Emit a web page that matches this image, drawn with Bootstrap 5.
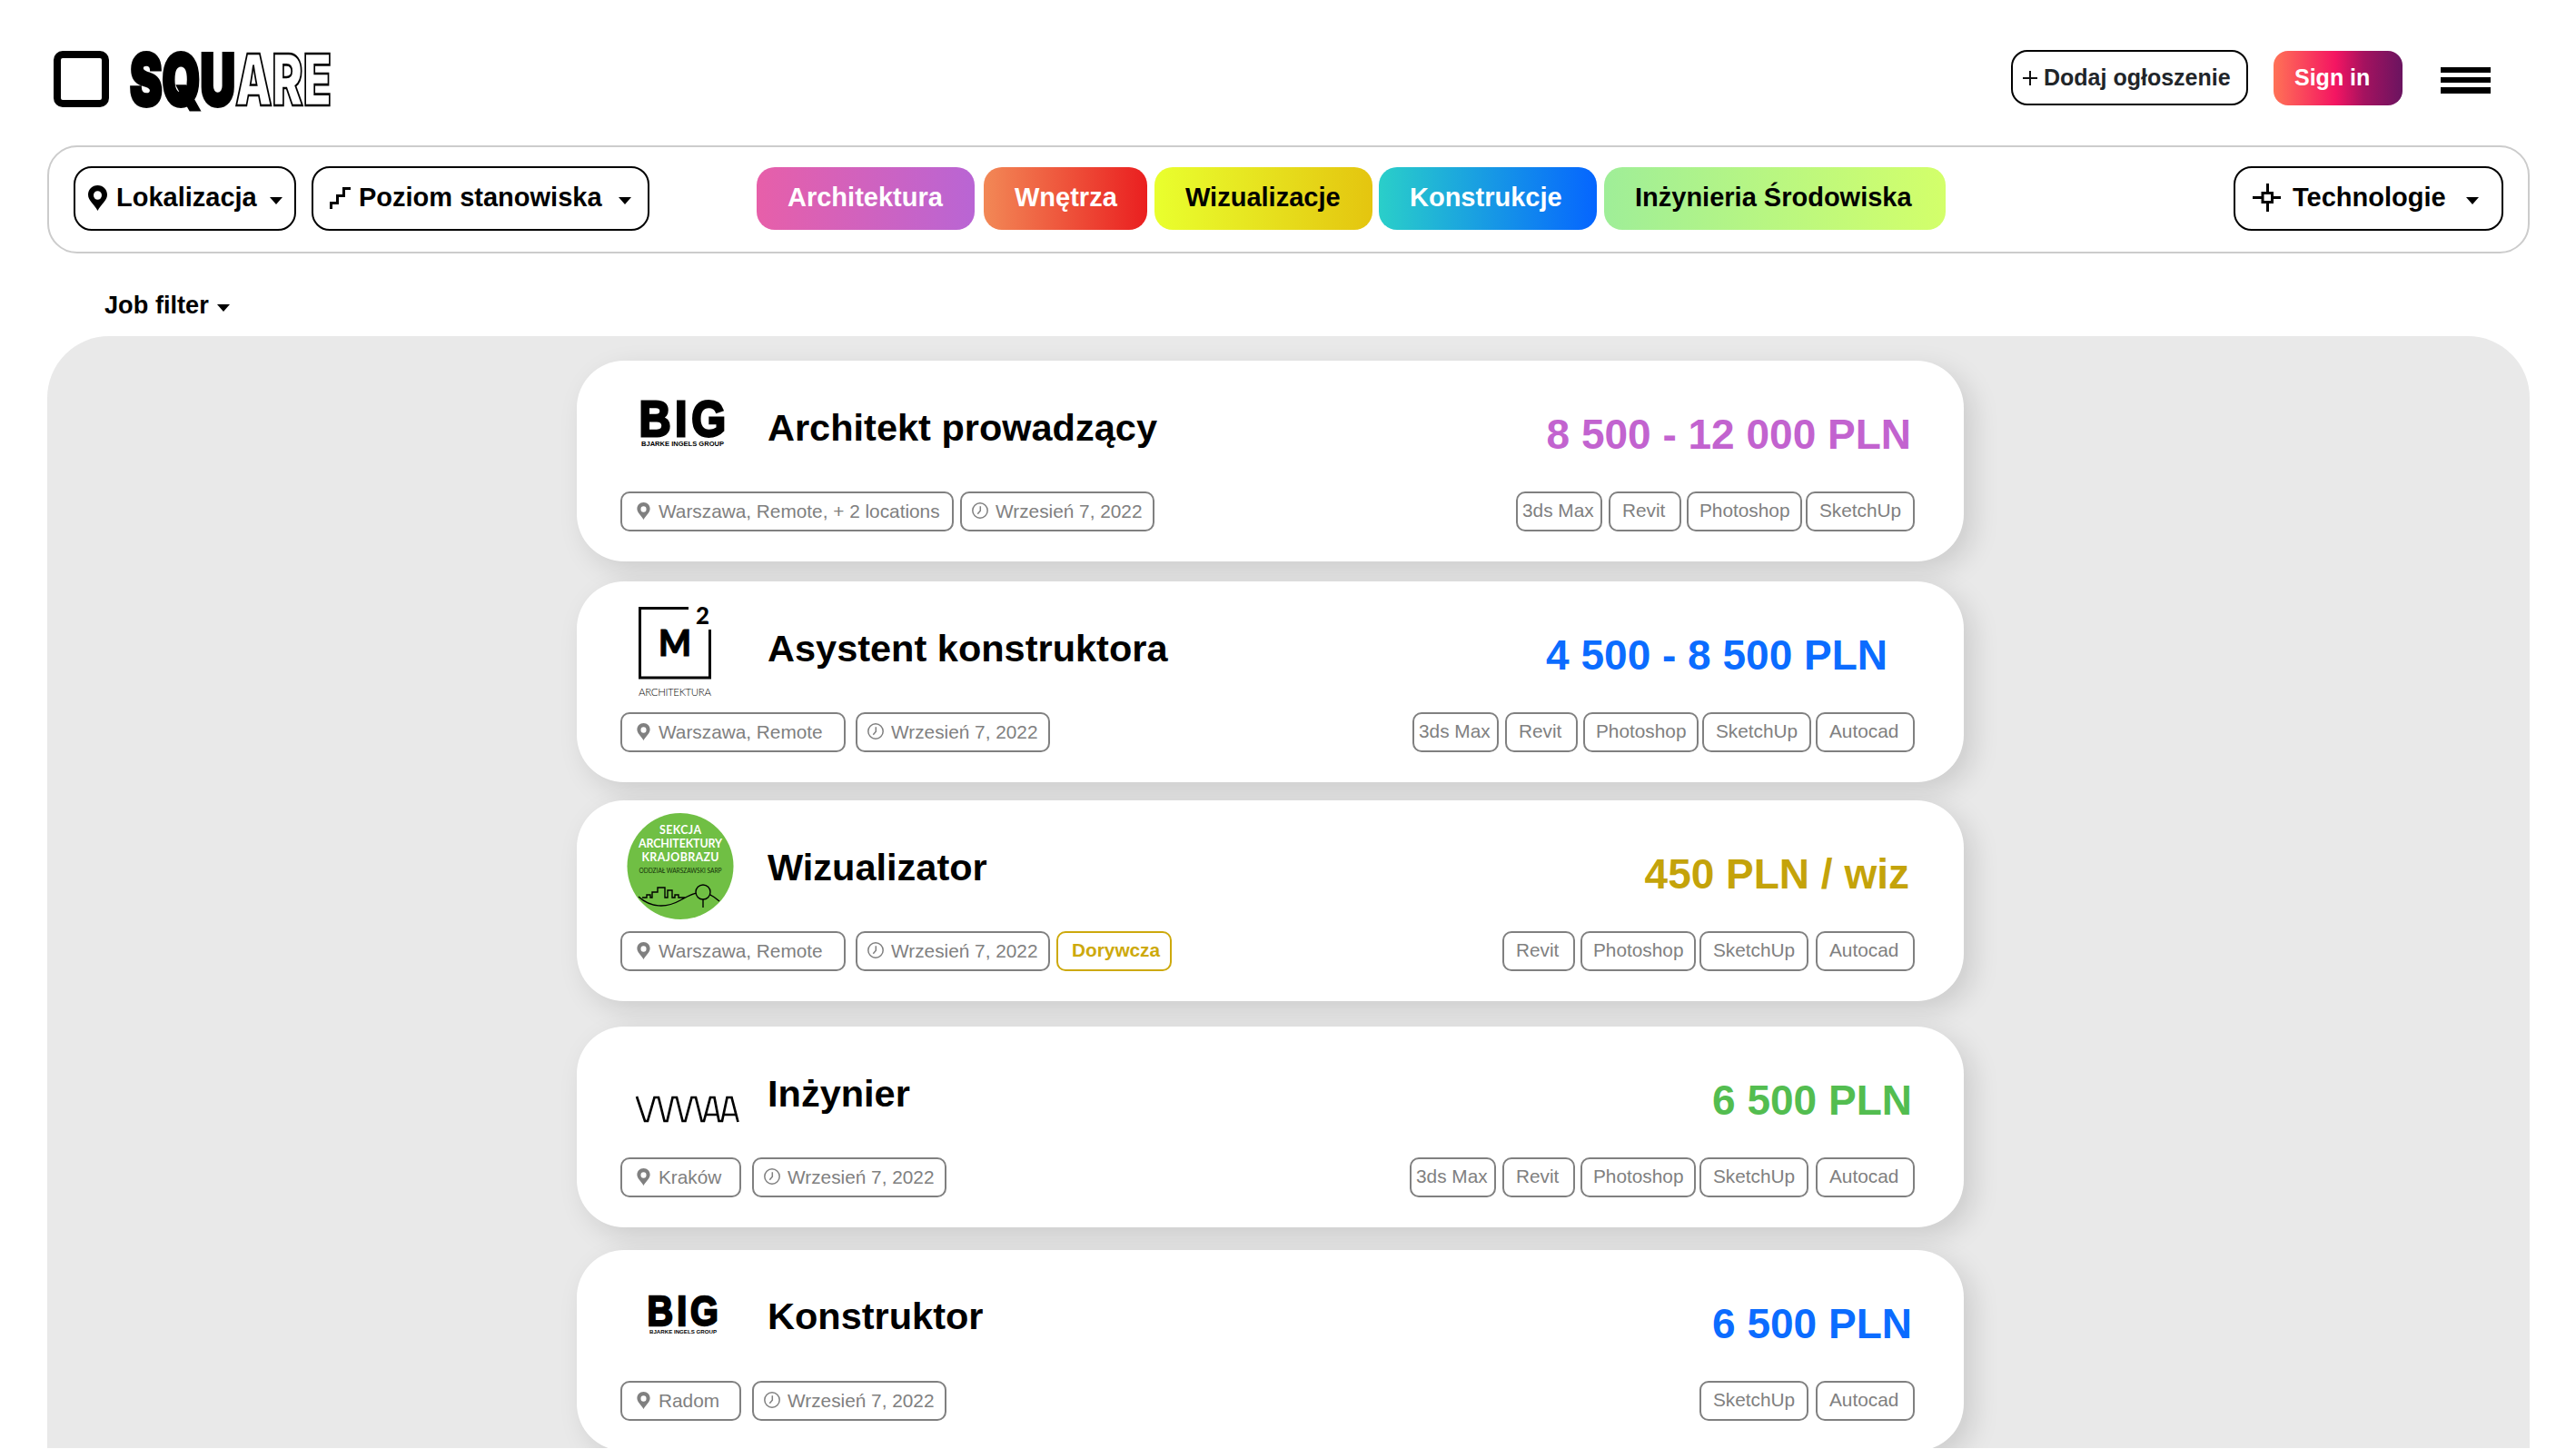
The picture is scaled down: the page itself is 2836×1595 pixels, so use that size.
<!DOCTYPE html>
<html lang="pl">
<head>
<meta charset="utf-8">
<meta name="viewport" content="width=device-width, initial-scale=1">
<title>SQUARE</title>
<link href="https://cdn.jsdelivr.net/npm/bootstrap@5.3.0/dist/css/bootstrap.min.css" rel="stylesheet">
<style>
  body { font-family: "Liberation Sans", Arial, sans-serif; color: #000; background: #fff; height: 1595px; overflow: hidden; }
  svg { display: block; overflow: visible; flex: none; }

  .topbar { height: 160px; padding: 55px 94px 0 59px; }
  .brand-mark { width: 61px; height: 62px; border: 8px solid #000; border-radius: 10px; margin-top: 1px; }
  .btn-add { width: 261px; height: 61px; border: 2px solid #000; border-radius: 18px; padding: 0 0 0 11px; font-size: 25px; font-weight: 700; color: #212529; gap: 7px; }
  .btn-sign { width: 142px; height: 60px; margin: 1px 42px 0 28px; border: 0; border-radius: 16px; padding: 0 0 1px 23px; font-size: 25px; font-weight: 700; color: #fff;
    background: linear-gradient(90deg, #ff7256 0%, #f41562 48%, #a5125f 70%, #6a1460 100%); }
  .burger { width: 55px; margin-top: 18.5px; gap: 5px; }
  .burger span { height: 6.4px; background: #000; }

  .filterbar { height: 119px; margin: 0 51px 0 52px; border: 2px solid #ccc; border-radius: 33px; padding: 0 27px 2px; }
  .pick { height: 71px; border: 2px solid #000; border-radius: 20px; padding: 0 0 2px; font-size: 29px; font-weight: 700; color: #000; }
  .pick-loc { width: 245px; padding-left: 14px; margin-right: 17px; }
  .pick-lvl { width: 372px; padding-left: 18px; margin-right: 118px; }
  .pick-tech { width: 297px; padding-left: 19px; }
  .tri { width: 0; height: 0; border: 7.5px solid transparent; border-top: 8px solid #000; border-bottom: 0; margin-top: 6px; }
  .cat { height: 69px; border: 0; border-radius: 20px; padding: 0 0 1px 34px; font-size: 29px; font-weight: 700; color: #000; text-align: left; }
  .cat-arch { width: 240px; color: #fff; background: linear-gradient(90deg, #e75fa9, #b965d4); }
  .cat-wn { width: 180px; color: #fff; margin-left: 10px; background: linear-gradient(90deg, #f28856, #ea1f20); }
  .cat-wiz { width: 240px; margin-left: 8px; background: linear-gradient(90deg, #e9ff2e, #e4c50f); }
  .cat-kon { width: 240px; color: #fff; margin-left: 7px; background: linear-gradient(90deg, #2acfc9, #0565ff); }
  .cat-env { width: 376px; margin-left: 8px; background: linear-gradient(90deg, #9fee98, #d3ff6a); }

  .jobfilter { height: 91px; padding: 42px 0 0 115px; font-size: 27.2px; font-weight: 700; line-height: 30px; gap: 9px; }

  .panel { height: 1224px; margin: 0 51px 0 52px; background: #e9e9e9; border-radius: 68px 68px 0 0; padding: 27px 0 0 583px; overflow: hidden; }
  .job { width: 1527px; height: 221px; flex: none; background: #fff; border-radius: 52px; box-shadow: 10px 10px 30px rgba(0,0,0,.125); padding: 0 54px 0 48px; }
  .job-head { height: 144px; }
  .job-title { font-size: 41.5px; font-weight: 700; line-height: 46px; margin: 51px 0 0 2px; }
  .pay { font-size: 46px; font-weight: 700; line-height: 52px; margin: 55px 4px 0 auto; white-space: pre; }
  .tagbox { height: 44px; border: 2px solid #808080; border-radius: 10px; font-size: 20.8px; line-height: 37px; color: #808080; white-space: nowrap; }
  .t-loc { padding-left: 16px; line-height: 39px; }
  .t-loc svg { margin: 10px 9px 0 0; }
  .t-date { width: 214px; padding-left: 11px; line-height: 39px; }
  .t-date svg { margin: 10px 8px 0 0; }
  .t-gig { width: 127px; margin-left: 7px; padding-left: 15px; line-height: 38px; font-weight: 700; border-color: #cda90c; color: #cda90c; }
  .t-max { width: 95px; padding-left: 5px; }
  .t-revit { width: 80px; padding-left: 13px; margin-left: 7px; }
  .t-ps { width: 127px; padding-left: 12px; margin-left: 6px; }
  .t-su { width: 120px; padding-left: 13px; margin-left: 4px; }
  .t-ac { width: 109px; padding-left: 13px; margin-left: 8px; }
</style>
</head>
<body>
<svg width="0" height="0" class="position-absolute">
  <symbol id="pin" viewBox="0 0 21 28"><path fill="currentColor" fill-rule="evenodd" d="M10.500 0C4.500 0 0 4.500 0 10.300C0 17 6.500 20.500 10.500 28C14.500 20.500 21 17 21 10.300C21 4.500 16.500 0 10.500 0ZM10.500 6.200A4.500 4.800 0 0 1 10.500 15.800A4.500 4.800 0 0 1 10.500 6.200Z"/></symbol>
  <symbol id="clock" viewBox="0 0 18 18"><circle cx="9" cy="9" r="8.200" fill="none" stroke="currentColor" stroke-width="1.500"/><path d="M9.300 4.300V9.300L6.300 12.800" fill="none" stroke="currentColor" stroke-width="1.500"/></symbol>
</svg>

<header class="topbar d-flex align-items-start">
  <div class="brand-mark"></div>
  <svg width="222" height="70" viewBox="0 0 222 70" style="margin-left:23px" font-family="Inter" font-weight="900" font-size="78">
    <text x="0" y="60.500" textLength="116" lengthAdjust="spacingAndGlyphs" stroke="#000" stroke-width="4">SQU</text>
    <text x="116" y="60.500" textLength="106" lengthAdjust="spacingAndGlyphs" fill="#fff" stroke="#000" stroke-width="2.600">ARE</text>
  </svg>
  <button class="btn-add bg-white ms-auto d-flex align-items-center">
    <svg width="16" height="16" viewBox="0 0 16 16"><path d="M8 0V16M0 8H16" stroke="#111" stroke-width="2"/></svg><span>Dodaj ogłoszenie</span>
  </button>
  <button class="btn-sign text-start">Sign in</button>
  <div class="burger d-flex flex-column"><span></span><span></span><span></span></div>
</header>

<nav class="filterbar d-flex align-items-center">
  <button class="pick pick-loc bg-white d-flex align-items-center">
    <svg width="21" height="28"><use href="#pin"/></svg><span style="margin-left:10px">Lokalizacja</span><i class="tri" style="margin-left:14px"></i>
  </button>
  <button class="pick pick-lvl bg-white d-flex align-items-center">
    <svg width="23" height="24" viewBox="0 0 23 24"><path d="M1.500 24V17.500H8.500V9.500H15.500V1.500H23" fill="none" stroke="#000" stroke-width="3"/></svg><span style="margin-left:9px">Poziom stanowiska</span><i class="tri" style="margin-left:18px"></i>
  </button>
  <button class="cat cat-arch">Architektura</button>
  <button class="cat cat-wn">Wnętrza</button>
  <button class="cat cat-wiz">Wizualizacje</button>
  <button class="cat cat-kon">Konstrukcje</button>
  <button class="cat cat-env">Inżynieria Środowiska</button>
  <button class="pick pick-tech bg-white d-flex align-items-center ms-auto">
    <svg width="31" height="31" viewBox="0 0 31 31"><path d="M16.500 0V10M16.500 21V31M0 15.500H10M22 15.500H31M11 10.500H21.500V20.500H11Z" fill="none" stroke="#000" stroke-width="3"/></svg><span style="margin-left:13px">Technologie</span><i class="tri" style="margin-left:22px"></i>
  </button>
</nav>

<div class="jobfilter d-flex align-items-start"><span>Job filter</span><i class="tri" style="margin-top:14px"></i></div>

<main class="panel d-flex flex-column">

  <article class="job" style="margin-bottom:22px">
    <div class="job-head d-flex align-items-start">
      <svg width="160" height="144" font-family="Liberation Sans" font-weight="700">
        <text transform="scale(.87 1)" x="23.500 69 90" y="83" font-size="56" stroke="#000" stroke-width="2.800">BIG</text>
        <text x="23" y="94" font-size="7" textLength="91" lengthAdjust="spacingAndGlyphs">BJARKE INGELS GROUP</text>
      </svg>
      <h2 class="job-title">Architekt prowadzący</h2>
      <div class="pay" style="color:#c263cf">8 500 - 12 000 PLN</div>
    </div>
    <div class="d-flex">
      <div class="tagbox t-loc d-flex" style="width:367px"><svg width="15" height="19"><use href="#pin"/></svg>Warszawa, Remote, + 2 locations</div>
      <div class="tagbox t-date d-flex" style="margin-left:7px"><svg width="18" height="18"><use href="#clock"/></svg>Wrzesień 7, 2022</div>
      <div class="d-flex ms-auto">
        <div class="tagbox t-max">3ds Max</div><div class="tagbox t-revit">Revit</div><div class="tagbox t-ps">Photoshop</div><div class="tagbox t-su">SketchUp</div>
      </div>
    </div>
  </article>

  <article class="job" style="margin-bottom:20px">
    <div class="job-head d-flex align-items-start">
      <svg width="160" height="144" font-family="Lato">
        <path d="M75 29.500H21.500V106H98.500V53" fill="none" stroke="#000" stroke-width="3"/>
        <text x="83" y="46.500" font-size="26" font-weight="900" textLength="15" lengthAdjust="spacingAndGlyphs">2</text>
        <text x="42" y="82" font-size="39" font-weight="900" textLength="36" lengthAdjust="spacingAndGlyphs" stroke="#000" stroke-width="1">M</text>
        <text x="20" y="126" font-size="11.500" font-weight="300" textLength="80">ARCHITEKTURA</text>
      </svg>
      <h2 class="job-title">Asystent konstruktora</h2>
      <div class="pay" style="color:#0b6cff;margin-right:30px">4 500 - 8 500 PLN</div>
    </div>
    <div class="d-flex">
      <div class="tagbox t-loc d-flex" style="width:248px"><svg width="15" height="19"><use href="#pin"/></svg>Warszawa, Remote</div>
      <div class="tagbox t-date d-flex" style="margin-left:11px"><svg width="18" height="18"><use href="#clock"/></svg>Wrzesień 7, 2022</div>
      <div class="d-flex ms-auto">
        <div class="tagbox t-max">3ds Max</div><div class="tagbox t-revit">Revit</div><div class="tagbox t-ps">Photoshop</div><div class="tagbox t-su">SketchUp</div><div class="tagbox t-ac" style="margin-left:5px">Autocad</div>
      </div>
    </div>
  </article>

  <article class="job" style="margin-bottom:28px">
    <div class="job-head d-flex align-items-start">
      <svg width="160" height="144" font-family="Lato" text-anchor="middle">
        <circle cx="66" cy="72.500" r="58.500" fill="#70bf44"/>
        <g fill="#fff" font-weight="700" font-size="12.400">
          <text x="66" y="37" textLength="46">SEKCJA</text>
          <text x="66" y="52" textLength="92">ARCHITEKTURY</text>
          <text x="66" y="67" textLength="85">KRAJOBRAZU</text>
        </g>
        <text x="66" y="80" font-size="7" textLength="91" lengthAdjust="spacingAndGlyphs" fill="#12300a">ODDZIAŁ WARSZAWSKI SARP</text>
        <path d="M20 106C33 118 50 119 66 110C84 100 92 96 109 111M24 107H29V104H33V107H35V101H41V96H49V107H52V99H57V107H60V104H64V107H71" fill="none" stroke="#000" stroke-width="1.400"/>
        <circle cx="91" cy="101" r="8" fill="#70bf44" stroke="#000" stroke-width="1.400"/><path d="M91 109V118" stroke="#000" stroke-width="1.400"/>
      </svg>
      <h2 class="job-title">Wizualizator</h2>
      <div class="pay" style="color:#c4a30a;margin-right:6px">450 PLN / wiz</div>
    </div>
    <div class="d-flex">
      <div class="tagbox t-loc d-flex" style="width:248px"><svg width="15" height="19"><use href="#pin"/></svg>Warszawa, Remote</div>
      <div class="tagbox t-date d-flex" style="margin-left:11px"><svg width="18" height="18"><use href="#clock"/></svg>Wrzesień 7, 2022</div>
      <div class="tagbox t-gig">Dorywcza</div>
      <div class="d-flex ms-auto">
        <div class="tagbox t-revit">Revit</div><div class="tagbox t-ps">Photoshop</div><div class="tagbox t-su">SketchUp</div><div class="tagbox t-ac">Autocad</div>
      </div>
    </div>
  </article>

  <article class="job" style="margin-bottom:25px">
    <div class="job-head d-flex align-items-start">
      <svg width="160" height="144"><path d="M18 77L27 104H30L37.500 78H42L48.500 104H51.500L57.500 78H62L68.500 104H71.500L78.500 78H83L89.500 104H92L99 78H103.500L108.500 104H112L117.500 78H122.500L129.500 105M95 97H107M114.500 97H127" fill="none" stroke="#000" stroke-width="2.700"/></svg>
      <h2 class="job-title">Inżynier</h2>
      <div class="pay" style="color:#53bd50;margin-right:3px">6 500 PLN</div>
    </div>
    <div class="d-flex">
      <div class="tagbox t-loc d-flex" style="width:133px"><svg width="15" height="19"><use href="#pin"/></svg>Kraków</div>
      <div class="tagbox t-date d-flex" style="margin-left:12px"><svg width="18" height="18"><use href="#clock"/></svg>Wrzesień 7, 2022</div>
      <div class="d-flex ms-auto">
        <div class="tagbox t-max">3ds Max</div><div class="tagbox t-revit">Revit</div><div class="tagbox t-ps">Photoshop</div><div class="tagbox t-su">SketchUp</div><div class="tagbox t-ac">Autocad</div>
      </div>
    </div>
  </article>

  <article class="job">
    <div class="job-head d-flex align-items-start">
      <svg width="160" height="144" font-family="Liberation Sans" font-weight="700">
        <text transform="scale(.87 1)" x="34 71.500 88.500" y="83" font-size="45.500" stroke="#000" stroke-width="2.300">BIG</text>
        <text x="32" y="92" font-size="5.600" textLength="74" lengthAdjust="spacingAndGlyphs">BJARKE INGELS GROUP</text>
      </svg>
      <h2 class="job-title" style="margin-top:50px">Konstruktor</h2>
      <div class="pay" style="color:#0b6cff;margin-right:3px">6 500 PLN</div>
    </div>
    <div class="d-flex">
      <div class="tagbox t-loc d-flex" style="width:133px"><svg width="15" height="19"><use href="#pin"/></svg>Radom</div>
      <div class="tagbox t-date d-flex" style="margin-left:12px"><svg width="18" height="18"><use href="#clock"/></svg>Wrzesień 7, 2022</div>
      <div class="d-flex ms-auto">
        <div class="tagbox t-su">SketchUp</div><div class="tagbox t-ac">Autocad</div>
      </div>
    </div>
  </article>
</main>
<script src="https://cdn.jsdelivr.net/npm/bootstrap@5.3.0/dist/js/bootstrap.bundle.min.js"></script>
</body>
</html>
